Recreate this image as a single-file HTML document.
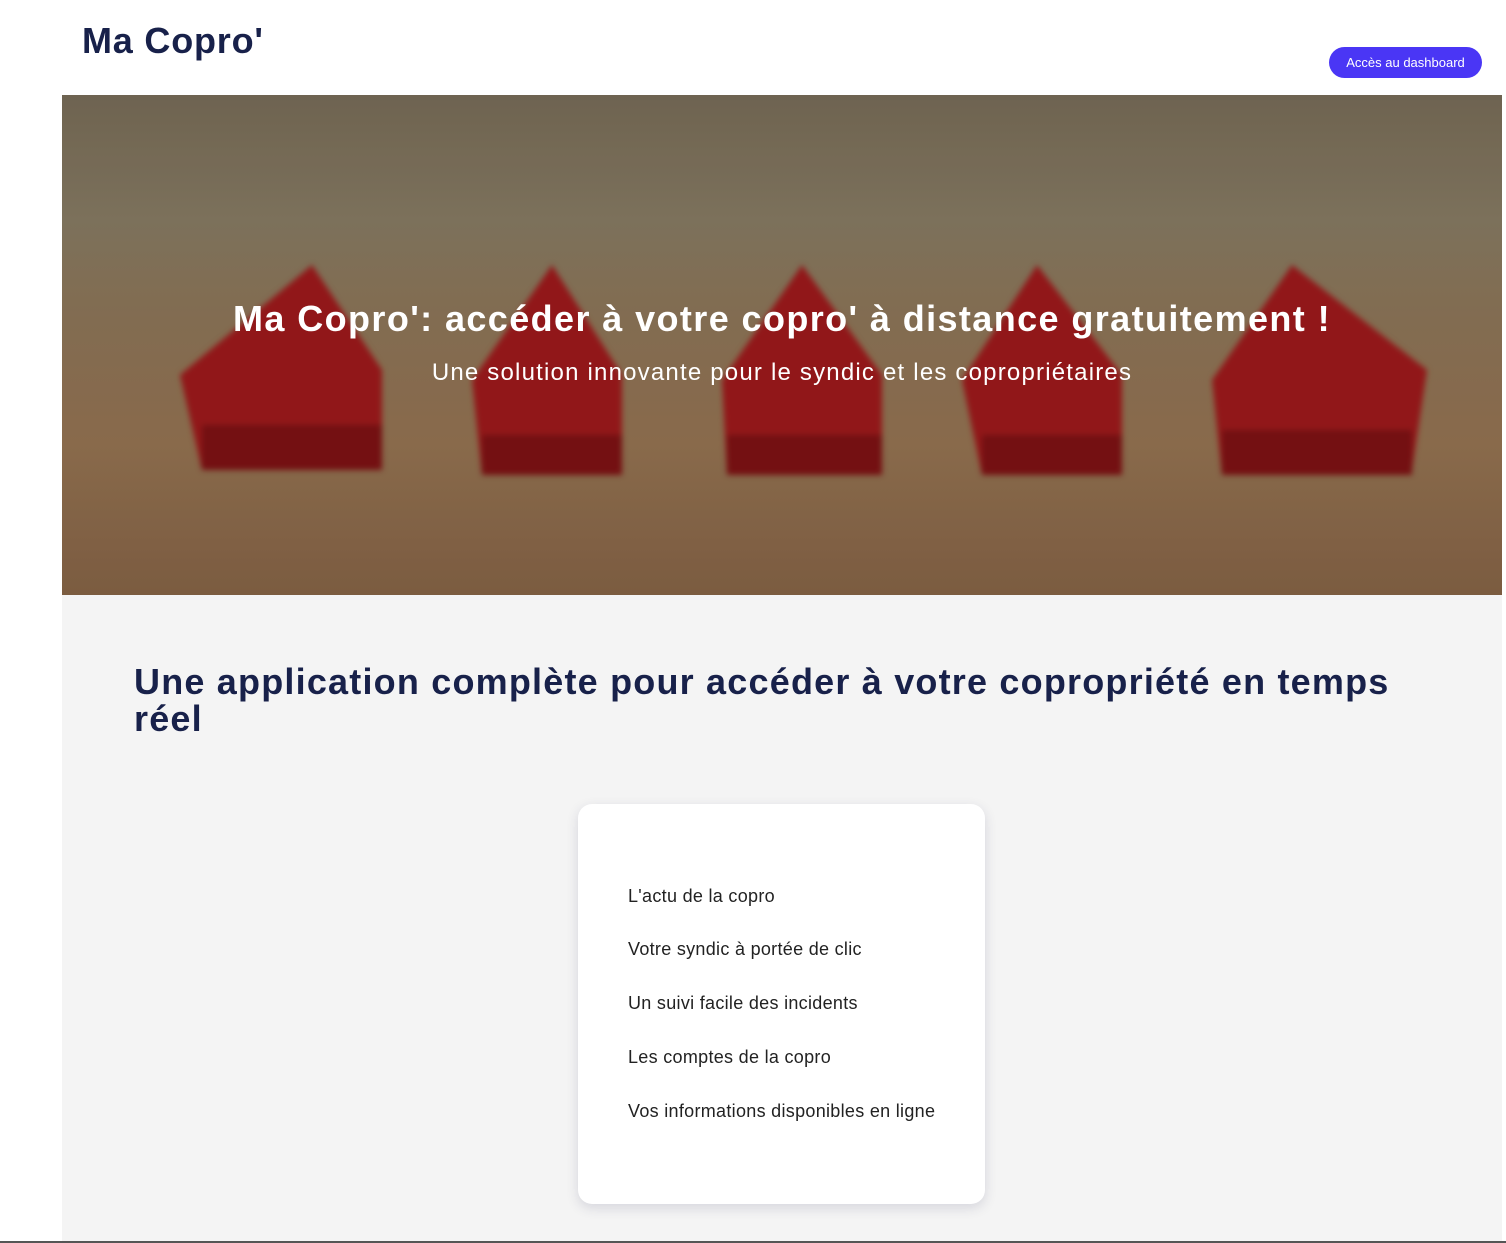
<!DOCTYPE html>
<html><head><meta charset="utf-8"><style>
body{margin:0;width:1506px;height:1243px;background:#fff;font-family:"Liberation Sans",sans-serif;position:relative;overflow:hidden}
.logo{position:absolute;left:82px;top:20px;font-size:36px;font-weight:bold;color:#18214a;letter-spacing:0.8px}
.btn{position:absolute;left:1329px;top:47px;width:153px;height:31px;border-radius:16px;background:#4a36f5;color:#fff;font-size:13px;line-height:31px;text-align:center}
.hero{position:absolute;left:62px;top:95px;width:1440px;height:500px;overflow:hidden;background:linear-gradient(180deg,#786c58 0%,#877b63 25%,#8e7658 45%,#957352 70%,#866446 100%)}
.hero h1{position:absolute;top:203px;left:0;width:1440px;text-align:center;margin:0;color:#fff;font-size:36px;font-weight:bold;letter-spacing:1.4px}
.hero p{position:absolute;top:264px;left:0;width:1440px;text-align:center;margin:0;color:#fff;font-size:24px;letter-spacing:1.2px}
.gray{position:absolute;left:62px;top:595px;width:1440px;height:647px;background:#f4f4f4}
.line{position:absolute;left:0;top:1241px;width:1506px;height:2px;background:#555}
h2{position:absolute;left:134px;top:663px;margin:0;width:1300px;font-size:36px;line-height:37px;color:#18214a;font-weight:bold;letter-spacing:1.2px}
.card{position:absolute;left:578px;top:804px;width:407px;height:400px;background:#fff;border-radius:14px;box-shadow:0 4px 12px rgba(40,40,90,.15)}
.card div{position:absolute;left:50px;font-size:18px;color:#222;letter-spacing:0.3px}
</style></head><body>
<div class="logo">Ma Copro'</div>
<div class="btn">Accès au dashboard</div>
<div class="hero">
<svg width="1440" height="500" style="position:absolute;left:0;top:0;filter:blur(3px)">
<g fill="#9e1a1c">
<path d="M118 280 L250 170 L320 275 L320 370 L140 375 Z"/>
<path d="M410 285 L490 170 L560 280 L560 380 L420 380 Z"/>
<path d="M660 285 L740 170 L820 280 L820 380 L665 380 Z"/>
<path d="M900 285 L975 170 L1060 280 L1060 380 L920 380 Z"/>
<path d="M1150 285 L1230 170 L1365 275 L1350 375 L1160 380 Z"/>
</g>
<g fill="#7e1214">
<rect x="140" y="330" width="180" height="45"/><rect x="420" y="340" width="140" height="40"/><rect x="665" y="340" width="155" height="40"/><rect x="920" y="340" width="140" height="40"/><rect x="1160" y="335" width="190" height="45"/>
</g>
</svg>
<div style="position:absolute;inset:0;background:rgba(0,0,0,.08)"></div>
<h1>Ma Copro': accéder à votre copro' à distance gratuitement !</h1>
<p>Une solution innovante pour le syndic et les copropriétaires</p>
</div>
<div class="gray"></div>
<h2>Une application complète pour accéder à votre copropriété en temps réel</h2>
<div class="card">
<div style="top:82px">L'actu de la copro</div>
<div style="top:135px">Votre syndic à portée de clic</div>
<div style="top:189px">Un suivi facile des incidents</div>
<div style="top:243px">Les comptes de la copro</div>
<div style="top:297px">Vos informations disponibles en ligne</div>
</div>
<div class="line"></div>
</body></html>
